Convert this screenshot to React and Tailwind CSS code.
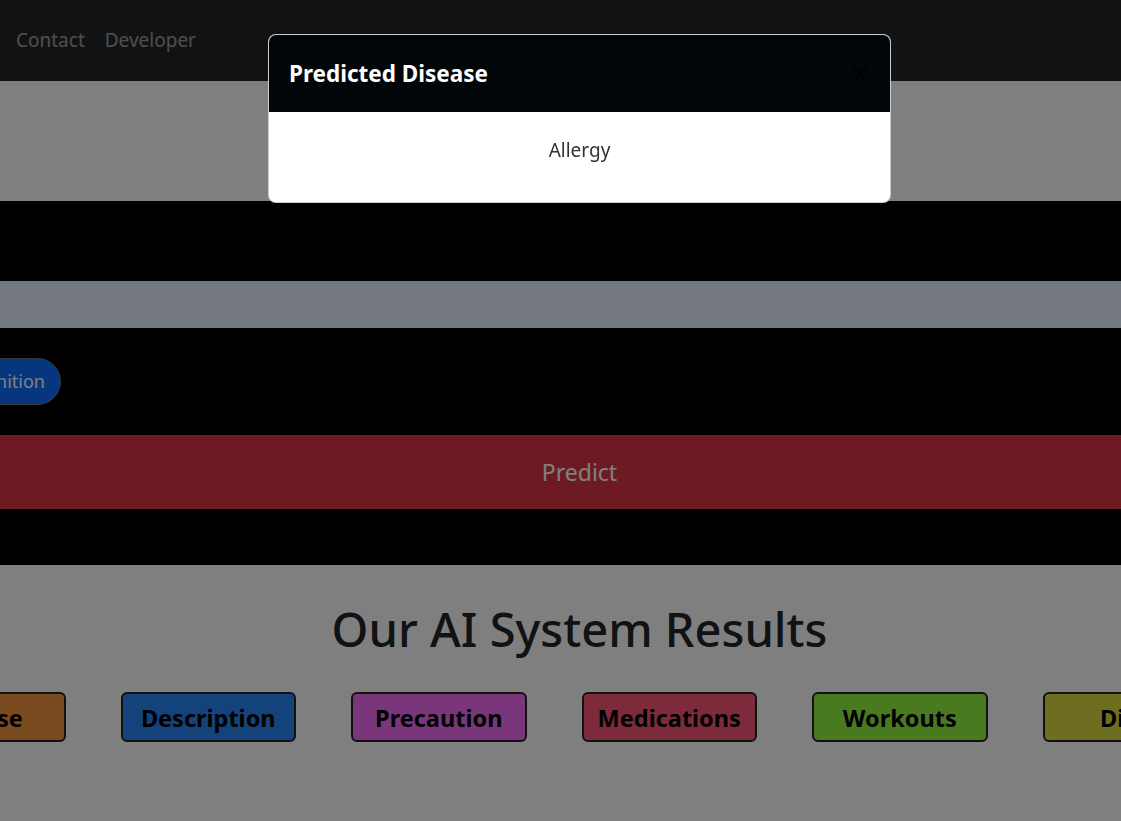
const results = [
  { label: "Disease", color: "bg-[#f4963e]" },
  { label: "Description", color: "bg-[#2885f4]" },
  { label: "Precaution", color: "bg-[#f26cf4]" },
  { label: "Medications", color: "bg-[#fa5676]" },
  { label: "Workouts", color: "bg-[#95f43f]" },
  { label: "Diets", color: "bg-[#dcdc40]" },
];

const App = () => {
  return (
    <div className="relative min-h-screen overflow-hidden bg-white font-['Noto_Sans',sans-serif]">
      <div className="w-[1159px]">
        {/* navbar */}
        <nav className="flex h-[81px] items-center gap-5 bg-[#212529] pl-4">
          <a className="text-[19px] text-white/55">Contact</a>
          <a className="text-[19px] text-white/55">Developer</a>
        </nav>

        <div className="h-[120px] bg-white"></div>

        {/* symptoms form */}
        <div className="h-[364px] bg-black pt-[80px]">
          <div className="ml-[-20px] h-[47px] w-[1200px] bg-[#e6f0ff]"></div>
          <button className="ml-[-150px] mt-[30px] flex h-[47px] w-[211px] items-center justify-end rounded-full border border-[#6c757d] bg-[#0d6efd] pr-[15px] text-[18px] text-white">
            Speech Recognition
          </button>
          <button className="mt-[30px] flex h-[74px] w-full items-center justify-center bg-[#dc3545] text-[23px] text-white">
            Predict
          </button>
        </div>

        {/* results */}
        <div className="pt-[28px] text-center">
          <h1 className="text-[47px] font-medium leading-[72px] text-[#212529]">
            Our AI System Results
          </h1>
          <div className="ml-[-110px] mt-[27px] flex gap-[55px]">
            {results.map((r) => (
              <button
                key={r.label}
                className={`h-[50px] w-[175.5px] shrink-0 rounded-md border-2 border-[#222] pt-1 text-[23.5px] font-bold text-black ${r.color}`}
              >
                {r.label}
              </button>
            ))}
          </div>
        </div>
      </div>

      {/* backdrop */}
      <div className="fixed inset-0 bg-black/50"></div>

      {/* modal */}
      <div className="fixed left-[268px] top-[34px] w-[623px] overflow-hidden rounded-lg border border-black/20 bg-white">
        <div className="flex h-[77px] items-center justify-between bg-[#030608] px-5">
          <h5 className="text-[22.5px] font-bold text-white">Predicted Disease</h5>
          <svg className="h-5 w-5" viewBox="0 0 20 20" fill="none">
            <path d="M3 3l14 14M17 3L3 17" stroke="#000" strokeWidth="1.8" />
          </svg>
        </div>
        <div className="h-[90px] pt-[24px] text-center text-[19px] leading-[28px] text-[#333]">
          Allergy
        </div>
      </div>
    </div>
  );
};

export default App;
